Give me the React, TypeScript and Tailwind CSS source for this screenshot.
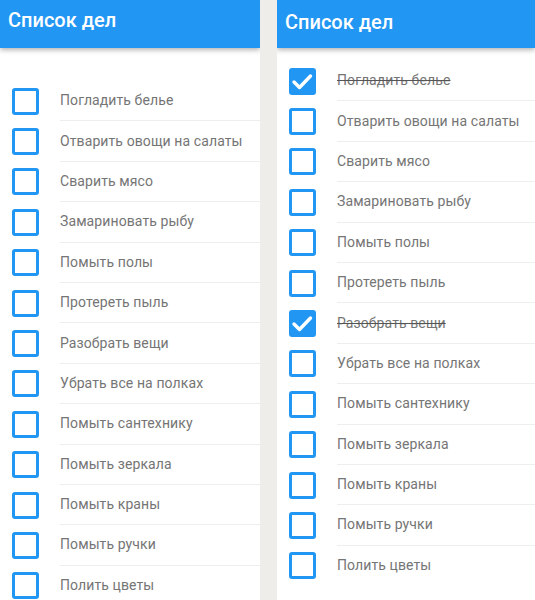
type Task = { title: string; done?: boolean };

const leftTasks: Task[] = [
  { title: "Погладить белье" },
  { title: "Отварить овощи на салаты" },
  { title: "Сварить мясо" },
  { title: "Замариновать рыбу" },
  { title: "Помыть полы" },
  { title: "Протереть пыль" },
  { title: "Разобрать вещи" },
  { title: "Убрать все на полках" },
  { title: "Помыть сантехнику" },
  { title: "Помыть зеркала" },
  { title: "Помыть краны" },
  { title: "Помыть ручки" },
  { title: "Полить цветы" },
];

const rightTasks: Task[] = leftTasks.map((t) => ({
  title: t.title,
  done: t.title === "Погладить белье" || t.title === "Разобрать вещи",
}));

function CheckBox({ done }: { done?: boolean }) {
  if (done) {
    return (
      <div className="flex size-[27px] items-center justify-center rounded-[3px] bg-[#2196f3]">
        <svg viewBox="0 0 27 27" className="size-[27px]">
          <polyline
            points="5,14 10.5,19.5 21.5,8"
            fill="none"
            stroke="white"
            strokeWidth="3.4"
            strokeLinecap="round"
            strokeLinejoin="round"
          />
        </svg>
      </div>
    );
  }
  return <div className="size-[27px] rounded-[3px] border-[3px] border-[#2196f3] bg-white" />;
}

function TodoRow({ task }: { task: Task }) {
  return (
    <li className="group flex h-[40.4px] items-center">
      <div className="flex w-[60px] shrink-0 items-center pl-3">
        <CheckBox done={task.done} />
      </div>
      <div className="flex h-full flex-1 items-center border-b border-[#eeeeee] group-last:border-b-0">
        <span
          className={
            task.done
              ? "text-[14px] tracking-[0.1px] text-[#757575] line-through decoration-[#555]"
              : "text-[14px] tracking-[0.1px] text-[#757575]"
          }
        >
          {task.title}
        </span>
      </div>
    </li>
  );
}

function Screen({ tasks, titleClass, listClass }: { tasks: Task[]; titleClass: string; listClass: string }) {
  return (
    <div className="flex h-full flex-1 flex-col overflow-hidden bg-white">
      <header className="relative z-10 h-12 shrink-0 bg-[#2196f3] px-2 shadow-[0_2px_5px_rgba(0,0,0,0.3)]">
        <h1 className={"text-[20px] font-medium leading-none text-white " + titleClass}>Список дел</h1>
      </header>
      <ul className={listClass}>
        {tasks.map((task) => (
          <TodoRow key={task.title} task={task} />
        ))}
      </ul>
    </div>
  );
}

export default function App() {
  return (
    <div
      className="flex h-[600px] w-[535px] overflow-hidden bg-[#efedea]"
      style={{ fontFamily: "Roboto, 'Noto Sans', sans-serif" }}
    >
      <div className="flex w-[260px] shrink-0">
        <Screen tasks={leftTasks} titleClass="pt-[10px]" listClass="pt-[33px]" />
      </div>
      <div className="w-[17px] shrink-0" />
      <div className="flex w-[258px] shrink-0">
        <Screen tasks={rightTasks} titleClass="pt-[12px]" listClass="pt-[13px]" />
      </div>
    </div>
  );
}
